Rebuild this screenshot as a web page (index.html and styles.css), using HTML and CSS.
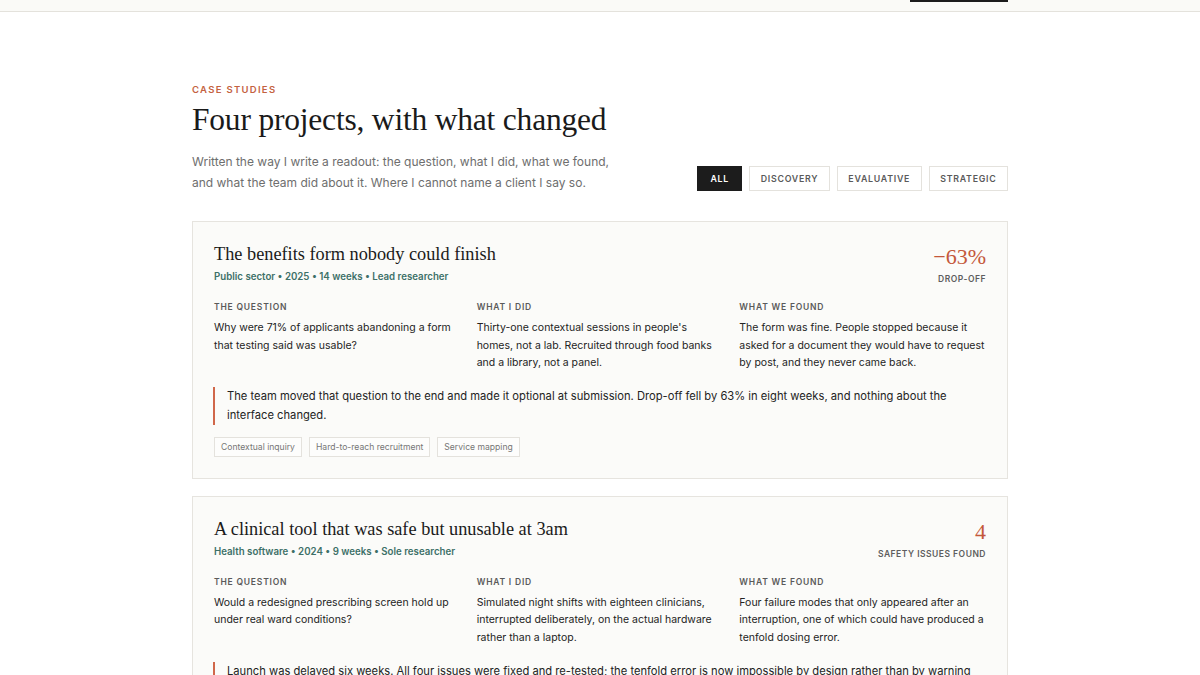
FILE: index.html
```html
<!DOCTYPE html>
<html lang="en">
<head>
<meta charset="utf-8">
<title>Case studies</title>
<link rel="stylesheet" href="styles.css">
</head>
<body>
<header class="topbar">
  <div class="wrap topbar-inner">
    <span class="topbar-cta"></span>
  </div>
</header>
<main class="wrap page">
  <p class="eyebrow">CASE STUDIES</p>
  <h1 class="title">Four projects, with what changed</h1>
  <div class="intro-row">
    <p class="intro">Written the way I write a readout: the question, what I did, what we found, and what the team did about it. Where I cannot name a client I say so.</p>
    <div class="filters">
      <button class="filter active">ALL</button>
      <button class="filter">DISCOVERY</button>
      <button class="filter">EVALUATIVE</button>
      <button class="filter">STRATEGIC</button>
    </div>
  </div>

  <article class="card">
    <div class="card-head">
      <div>
        <h2 class="card-title">The benefits form nobody could finish</h2>
        <p class="meta">Public sector • 2025 • 14 weeks • Lead researcher</p>
      </div>
      <div class="stat">
        <span class="stat-num">−63%</span>
        <span class="stat-label">DROP-OFF</span>
      </div>
    </div>
    <div class="cols">
      <div>
        <h3 class="col-label">THE QUESTION</h3>
        <p class="col-text">Why were 71% of applicants abandoning a form that testing said was usable?</p>
      </div>
      <div>
        <h3 class="col-label">WHAT I DID</h3>
        <p class="col-text">Thirty-one contextual sessions in people's homes, not a lab. Recruited through food banks and a library, not a panel.</p>
      </div>
      <div>
        <h3 class="col-label">WHAT WE FOUND</h3>
        <p class="col-text">The form was fine. People stopped because it asked for a document they would have to request by post, and they never came back.</p>
      </div>
    </div>
    <blockquote class="outcome">The team moved that question to the end and made it optional at submission. Drop-off fell by 63% in eight weeks, and nothing about the interface changed.</blockquote>
    <ul class="tags">
      <li class="tag">Contextual inquiry</li>
      <li class="tag">Hard-to-reach recruitment</li>
      <li class="tag">Service mapping</li>
    </ul>
  </article>

  <article class="card">
    <div class="card-head">
      <div>
        <h2 class="card-title">A clinical tool that was safe but unusable at 3am</h2>
        <p class="meta">Health software • 2024 • 9 weeks • Sole researcher</p>
      </div>
      <div class="stat">
        <span class="stat-num">4</span>
        <span class="stat-label">SAFETY ISSUES FOUND</span>
      </div>
    </div>
    <div class="cols">
      <div>
        <h3 class="col-label">THE QUESTION</h3>
        <p class="col-text">Would a redesigned prescribing screen hold up under real ward conditions?</p>
      </div>
      <div>
        <h3 class="col-label">WHAT I DID</h3>
        <p class="col-text">Simulated night shifts with eighteen clinicians, interrupted deliberately, on the actual hardware rather than a laptop.</p>
      </div>
      <div>
        <h3 class="col-label">WHAT WE FOUND</h3>
        <p class="col-text">Four failure modes that only appeared after an interruption, one of which could have produced a tenfold dosing error.</p>
      </div>
    </div>
    <blockquote class="outcome">Launch was delayed six weeks. All four issues were fixed and re-tested; the tenfold error is now impossible by design rather than by warning message.</blockquote>
    <ul class="tags">
      <li class="tag">Simulation testing</li>
      <li class="tag">Safety-critical UX</li>
    </ul>
  </article>
</main>
</body>
</html>
```

FILE: styles.css
```css
* { box-sizing: border-box; }
html, body { margin: 0; padding: 0; }
body {
  background: #ffffff;
  color: #1c1c1c;
  font-family: Inter, "Noto Sans", sans-serif;
}
.wrap {
  width: 816px;
  margin: 0 auto;
}
.topbar {
  height: 12px;
  background: #fafaf7;
  border-bottom: 1px solid #e4e2dc;
}
.topbar-inner {
  display: flex;
  justify-content: flex-end;
}
.topbar-cta {
  display: block;
  width: 98px;
  height: 2px;
  background: #1c1c1c;
}
.page {
  padding-top: 72px;
  padding-bottom: 40px;
}
.eyebrow {
  margin: 0;
  font-size: 9.5px;
  font-weight: 600;
  letter-spacing: 1.3px;
  color: #c4623f;
  line-height: 12px;
}
.title {
  margin: 5px 0 0;
  font-family: "Liberation Serif", serif;
  font-weight: 400;
  font-size: 31.5px;
  line-height: 38px;
  color: #1a1a1a;
  letter-spacing: -0.2px;
}
.intro-row {
  display: flex;
  justify-content: space-between;
  align-items: flex-end;
  margin-top: 12px;
}
.intro {
  margin: 0;
  width: 440px;
  font-size: 12px;
  line-height: 21px;
  color: #6e6e6e;
}
.filters {
  display: flex;
  gap: 7px;
  margin-bottom: 2px;
}
.filter {
  height: 25px;
  padding: 0 10.5px;
  border: 1px solid #e4e2dd;
  background: #fff;
  font-family: Inter, "Noto Sans", sans-serif;
  font-size: 8.8px;
  font-weight: 600;
  letter-spacing: 0.75px;
  color: #5a5a5a;
  cursor: pointer;
}
.filter.active {
  min-width: 45px;
  background: #1c1c1c;
  border-color: #1c1c1c;
  color: #fff;
}
.card {
  margin-top: 28px;
  background: #fbfbf9;
  border: 1px solid #e6e4df;
  padding: 19px 21px 21px;
}
.card + .card { margin-top: 17px; }
.card-head {
  display: flex;
  justify-content: space-between;
  align-items: flex-start;
}
.card-title {
  margin: 0;
  font-family: "Liberation Serif", serif;
  font-weight: 400;
  font-size: 18.3px;
  line-height: 26px;
  color: #1a1a1a;
}
.meta {
  margin: 4px 0 0;
  font-size: 9.7px;
  font-weight: 600;
  color: #3d7068;
  line-height: 12px;
}
.stat {
  display: flex;
  flex-direction: column;
  align-items: flex-end;
  padding-top: 3px;
}
.stat-num {
  font-family: "Liberation Serif", serif;
  font-size: 22px;
  line-height: 26px;
  color: #c4583b;
}
.stat-label {
  margin-top: 4px;
  font-size: 8.5px;
  font-weight: 600;
  letter-spacing: 0.5px;
  color: #5e5e5e;
  line-height: 11px;
}
.cols {
  display: grid;
  grid-template-columns: repeat(3, 1fr);
  gap: 16px;
  margin-top: 17px;
}
.col-label {
  margin: 0;
  font-size: 8.5px;
  font-weight: 600;
  letter-spacing: 0.8px;
  color: #5a5a5a;
  line-height: 11px;
}
.col-text {
  margin: 6px 0 0;
  font-size: 10.5px;
  line-height: 17.6px;
  color: #232323;
}
.outcome {
  margin: 15px 0 0 -1px;
  padding: 0 0 0 12px;
  border-left: 2px solid #d0674a;
  font-size: 11.2px;
  line-height: 19px;
  color: #232323;
}
.tags {
  list-style: none;
  margin: 12px 0 0;
  padding: 0;
  display: flex;
  gap: 7px;
}
.tag {
  height: 20px;
  padding: 0 6px;
  display: flex;
  align-items: center;
  border: 1px solid #e4e2dd;
  background: #fdfdfc;
  font-size: 8.6px;
  color: #767676;
}
```
